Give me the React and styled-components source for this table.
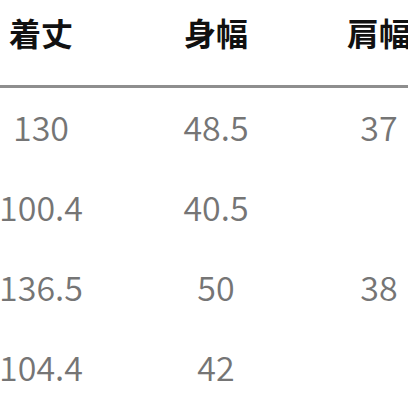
import React from 'react';
import styled, {createGlobalStyle} from 'styled-components';

const rows = [
  ['130', '48.5', '37'],
  ['100.4', '40.5', ''],
  ['136.5', '50', '38'],
  ['104.4', '42', ''],
];

const heads = ['着丈', '身幅', '肩幅'];

const App = () => {
  return (
    <Page>
      <GlobalStyle/>
      <HeadRow>
        {heads.map(h => <HeadCell key={h}>{h}</HeadCell>)}
      </HeadRow>
      <Rule/>
      {rows.map((r, i) => (
        <BodyRow key={i}>
          {r.map((v, j) => <Cell key={j}>{v}</Cell>)}
        </BodyRow>
      ))}
    </Page>
  );
}

export default App;

const GlobalStyle = createGlobalStyle`
  html, body {
    margin: 0;
    padding: 0;
    background: #fff;
    overflow: hidden;
  }
`;

const Page = styled.div`
  width: 408px;
  height: 408px;
  overflow: hidden;
  font-family: "Noto Sans CJK JP", "Noto Sans", sans-serif;
`;

const Row = styled.div`
  display: grid;
  grid-template-columns: 82px 268px 58px;
  justify-items: center;
`;

const HeadRow = styled(Row)`
  height: 85px;
  align-items: start;
  padding-top: 16px;
  box-sizing: border-box;
`;

const HeadCell = styled.div`
  font-size: 32px;
  line-height: 32px;
  font-weight: 700;
  color: #111;
  white-space: nowrap;
`;

const Rule = styled.div`
  height: 3px;
  background: #8e8e8e;
`;

const BodyRow = styled(Row)`
  height: 80px;
  align-items: center;
`;

const Cell = styled.div`
  font-size: 34px;
  line-height: 34px;
  font-weight: 350;
  color: #757575;
  white-space: nowrap;
  transform: translateY(-1px);
`;
